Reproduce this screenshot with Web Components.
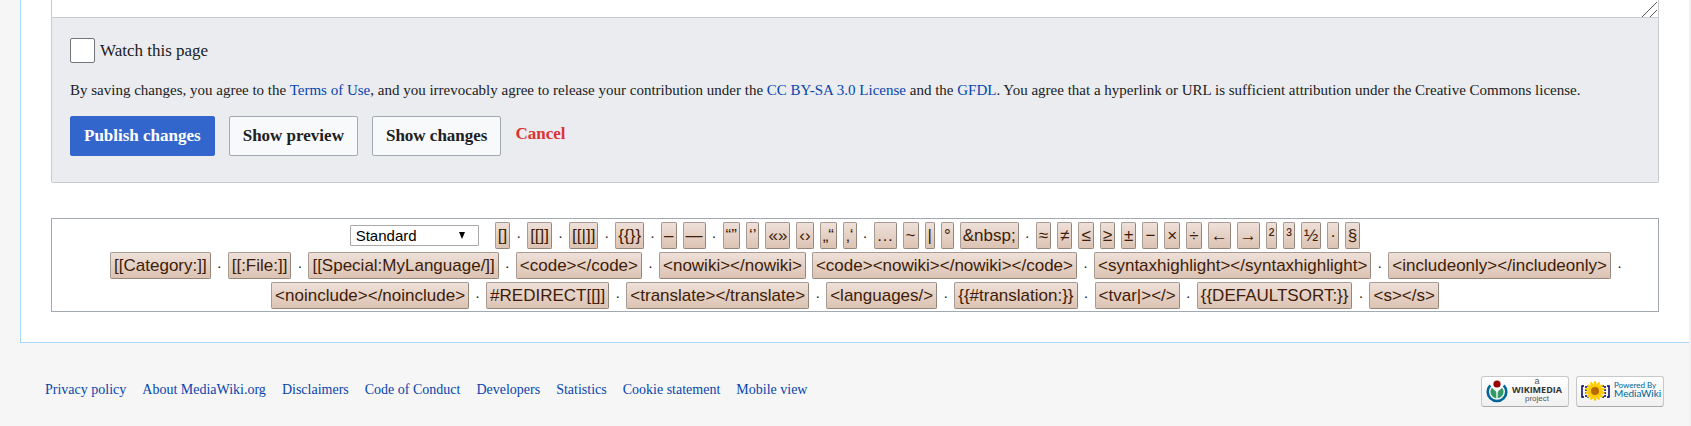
<!DOCTYPE html>
<html lang="en">
<head>
<meta charset="utf-8">
<title>Edit page</title>
<style>
    html {
        background: #f6f6f6;
    }

    body {
        margin: 0;
        font-family: "Liberation Serif", "Times New Roman", serif;
        color: #202122;
    }
</style>
</head>
<body>
<wiki-page>
    <edit-form></edit-form>
    <edit-tools></edit-tools>
    <page-footer slot="footer"></page-footer>
</wiki-page>

<script>
class BaseElement extends HTMLElement {

    connectedCallback() {
        if (this.shadowRoot) return
        const template = document.createElement('template')
        template.innerHTML = this.render()
        this.attachShadow({ mode: 'open' }).appendChild(template.content.cloneNode(true))
    }

}

class WikiPage extends BaseElement {

    render() {
        return `
            <main><slot></slot></main>
            <slot name="footer"></slot>

            <style>
                :host {
                    display: block;
                    border-right: 2px solid #f1f1f1;
                }

                main {
                    margin-left: 20px;
                    padding: 0 30px 30px;
                    background: #fff;
                    border: 1px solid #a7d7f9;
                    border-width: 0 0 1px 1px;
                }
            </style>
        `
    }

}

class WikiButton extends BaseElement {

    render() {
        return `
            <button type="button"><slot></slot></button>

            <style>
                :host {
                    display: block;
                }

                button {
                    display: block;
                    height: 40px;
                    padding: 0 13px;
                    border: 1px solid #a2a9b1;
                    border-radius: 2px;
                    background: #f8f9fa;
                    color: #202122;
                    font: bold 17px/20px "Liberation Serif", "Times New Roman", serif;
                    cursor: pointer;
                }

                :host([primary]) button {
                    background: #36c;
                    border-color: #36c;
                    color: #fff;
                }
            </style>
        `
    }

}

class EditForm extends BaseElement {

    render() {
        return `
            <textarea aria-label="Page text"></textarea>
            <div class="options">
                <label><input type="checkbox">Watch this page</label>
                <p>By saving changes, you agree to the <a href="#">Terms of Use</a>, and you irrevocably agree to release your contribution under the <a href="#">CC BY-SA 3.0 License</a> and the <a href="#">GFDL</a>. You agree that a hyperlink or URL is sufficient attribution under the Creative Commons license.</p>
                <div class="buttons">
                    <wiki-button primary>Publish changes</wiki-button>
                    <wiki-button>Show preview</wiki-button>
                    <wiki-button>Show changes</wiki-button>
                    <a class="cancel" href="#">Cancel</a>
                </div>
            </div>

            <style>
                :host {
                    display: block;
                    border: 1px solid #c8ccd1;
                    border-top: 0;
                    border-radius: 0 0 2px 2px;
                }

                textarea {
                    display: block;
                    box-sizing: border-box;
                    width: 100%;
                    height: 17px;
                    padding: 0;
                    border: 0;
                    outline: 0;
                    resize: none;
                    background: #fff url("data:image/svg+xml,%3Csvg xmlns='http://www.w3.org/2000/svg' width='16' height='16'%3E%3Cpath d='M0 16L15 1M8 16l7-7' stroke='%23555'/%3E%3C/svg%3E") no-repeat right bottom;
                }

                .options {
                    padding: 20px 18px 26px;
                    background: #eaecf0;
                    border-top: 1px solid #c8ccd1;
                }

                label {
                    display: flex;
                    align-items: center;
                    gap: 5px;
                    font-size: 17px;
                    line-height: 25px;
                }

                input {
                    appearance: none;
                    width: 25px;
                    height: 25px;
                    margin: 0;
                    background: #fff;
                    border: 1px solid #72777d;
                    border-radius: 2px;
                }

                p {
                    margin: 16px 0 14px;
                    font-size: 15px;
                    line-height: 23px;
                }

                a {
                    color: #0645ad;
                    text-decoration: none;
                }

                .buttons {
                    display: flex;
                    gap: 14px;
                }

                .cancel {
                    font: bold 17px/36px "Liberation Serif", "Times New Roman", serif;
                    color: #d33;
                }
            </style>
        `
    }

}

class InsertChar extends BaseElement {

    render() {
        return `
            <a href="#"><slot></slot></a>

            <style>
                :host {
                    display: block;
                }

                a {
                    display: block;
                    padding: 0 var(--char-padding, 3px);
                    border: 1px solid;
                    border-color: #a89c95 #95867c #95867c #a89c95;
                    border-radius: 2px;
                    background: linear-gradient(#eee0d9, #dcc3b3);
                    color: #3e1c08;
                    font-size: 17px;
                    line-height: 25px;
                    text-decoration: none;
                    white-space: nowrap;
                }
            </style>
        `
    }

}

// null stands for the dot between two groups
const CHARS = [
    [
        '[]', null, '[[]]', null, '[[|]]', null, '{{}}', null, '–', '—', null,
        '“”', '‘’', '«»', '‹›', '„“', '‚‘', null, '…', '~', '|', '°', '&nbsp;', null,
        '≈', '≠', '≤', '≥', '±', '−', '×', '÷', '←', '→', '²', '³', '½', '·', '§'
    ],
    [
        '[[Category:]]', null, '[[:File:]]', null, '[[Special:MyLanguage/]]', null,
        '<code></code>', null, '<nowiki></nowiki>', '<code><nowiki></nowiki></code>', null,
        '<syntaxhighlight></syntaxhighlight>', null, '<includeonly></includeonly>', null
    ],
    [
        '<noinclude></noinclude>', null, '#REDIRECT[[]]', null, '<translate></translate>', null,
        '<languages/>', null, '{{#translation:}}', null, '<tvar|></>', null,
        '{{DEFAULTSORT:}}', null, '<s></s>'
    ]
]

const escapeHtml = text => text.replace(/&/g, '&amp;').replace(/</g, '&lt;').replace(/>/g, '&gt;')

class EditTools extends BaseElement {

    render() {
        const rows = CHARS.map((row, i) => `
            <div class="row">
                ${i === 0 ? '<select aria-label="Character set"><option>Standard</option></select>' : ''}
                ${row.map(c => c === null ? '<span>·</span>' : `<insert-char>${escapeHtml(c)}</insert-char>`).join('')}
            </div>
        `)
        return `
            ${rows.join('')}

            <style>
                :host {
                    display: flex;
                    flex-direction: column;
                    gap: 3px;
                    margin-top: 35px;
                    padding: 3px 2px 2px;
                    border: 1px solid #a2a9b1;
                    font-family: "Liberation Sans", Arial, sans-serif;
                }

                .row {
                    display: flex;
                    flex-wrap: wrap;
                    justify-content: center;
                    align-items: center;
                    gap: 3px 6px;
                }

                .row:first-child {
                    --char-padding: 2px;
                }

                .row:nth-child(2) {
                    padding-left: 22px;
                }

                span {
                    width: 5px;
                    font-size: 15px;
                    line-height: 25px;
                    text-align: center;
                }

                select {
                    appearance: none;
                    width: 129px;
                    height: 21px;
                    margin-right: 10px;
                    padding: 0 5px;
                    border: 1px solid #a9a9a9;
                    border-radius: 1px;
                    background: #fff url("data:image/svg+xml,%3Csvg xmlns='http://www.w3.org/2000/svg' width='6' height='7'%3E%3Cpath d='M0 0h6L3 7z'/%3E%3C/svg%3E") no-repeat right 13px center;
                    color: #000;
                    font: 15px "Liberation Sans", Arial, sans-serif;
                }
            </style>
        `
    }

}

class FooterBadge extends BaseElement {

    render() {
        return `
            <a href="#"><slot></slot></a>

            <style>
                :host {
                    display: block;
                }

                a {
                    display: block;
                    box-sizing: border-box;
                    width: 88px;
                    height: 31px;
                    border: 1px solid #c8c8c8;
                    border-bottom-color: #aaa;
                    border-radius: 3px;
                    background: linear-gradient(#fff, #f0f0f0);
                }
            </style>
        `
    }

}

class PageFooter extends BaseElement {

    render() {
        const links = ['Privacy policy', 'About MediaWiki.org', 'Disclaimers', 'Code of Conduct', 'Developers', 'Statistics', 'Cookie statement', 'Mobile view']
        const petals = Array.from({ length: 14 }, (_, i) => `<ellipse cx="18" cy="8" rx="1.500" ry="4" transform="rotate(${i * 360 / 14} 18 14)"/>`).join('')
        return `
            <nav>${links.map(l => `<a href="#">${l}</a>`).join('')}</nav>
            <div class="badges">
                <footer-badge>
                    <svg width="86" height="29" viewBox="0 0 86 29">
                        <path d="M8.300 8.300a9.300 9.300 0 1 0 13.400 0" fill="none" stroke="#069" stroke-width="2.600"/>
                        <path d="M14.300 21.300a6.400 6.400 0 0 1-4.300-10.500c1.500 2.500 4.300 2.500 4.300 5.500zM15.700 21.300a6.400 6.400 0 0 0 4.300-10.500c-1.500 2.500-4.300 2.500-4.300 5.500z" fill="#396"/>
                        <circle cx="15" cy="7" r="3.600" fill="#900"/>
                        <g font-family="Liberation Sans, Arial, sans-serif" font-size="9" fill="#555" text-anchor="middle">
                            <text x="55" y="7">a</text>
                            <text x="55" y="16" font-family="Open Sans, sans-serif" font-weight="bold" fill="#333">WIKIMEDIA</text>
                            <text x="55" y="24" font-size="8">project</text>
                        </g>
                    </svg>
                </footer-badge>
                <footer-badge>
                    <svg width="86" height="29" viewBox="0 0 86 29">
                        <g fill="none" stroke="#006" stroke-width="1.500">
                            <path d="M7 9H5v11h2M30 9h2v11h-2"/>
                            <path d="M12 9H9v11h3M25 9h3v11h-3" stroke-dasharray="2 1"/>
                        </g>
                        <g fill="#fc0">${petals}</g>
                        <circle cx="18" cy="14" r="4" fill="#b76a00"/>
                        <g font-family="Lato, sans-serif" fill="#069">
                            <text x="37" y="11" font-size="8">Powered By</text>
                            <text x="37" y="20" font-size="10">MediaWiki</text>
                        </g>
                    </svg>
                </footer-badge>
            </div>

            <style>
                :host {
                    display: flex;
                    justify-content: space-between;
                    align-items: flex-start;
                    padding: 33px 25px 19px 45px;
                }

                nav {
                    display: flex;
                    flex-wrap: wrap;
                    gap: 16px;
                    padding-top: 3px;
                    font-size: 14px;
                    line-height: 22px;
                }

                nav a {
                    color: #0645ad;
                    text-decoration: none;
                }

                .badges {
                    display: flex;
                    gap: 7px;
                }

                svg {
                    display: block;
                }
            </style>
        `
    }

}

customElements.define('wiki-button', WikiButton)
customElements.define('insert-char', InsertChar)
customElements.define('footer-badge', FooterBadge)
customElements.define('edit-form', EditForm)
customElements.define('edit-tools', EditTools)
customElements.define('page-footer', PageFooter)
customElements.define('wiki-page', WikiPage)
</script>
</body>
</html>
